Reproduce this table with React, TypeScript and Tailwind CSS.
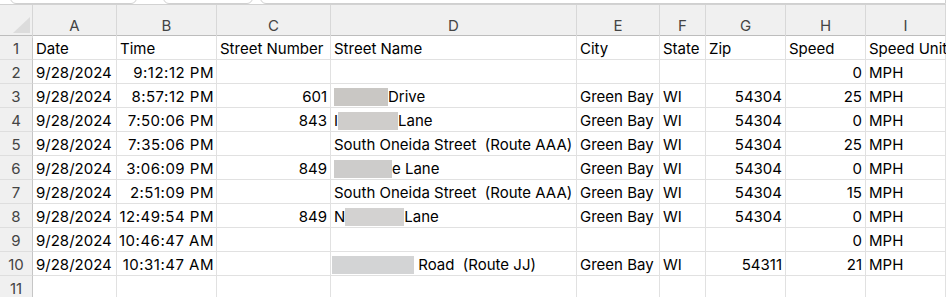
import React from 'react'

const COLS = ['A', 'B', 'C', 'D', 'E', 'F', 'G', 'H', 'I']
const GRID = 'grid grid-cols-[33px_84px_100px_114px_246px_83px_46px_80px_80px_80px]'

type Cell = string | React.ReactNode
type Row = { cells: Cell[]; right: boolean[] }

// grey redaction block
const Blur = ({ w, tone = 'bg-[#c9c7c4]', className = '' }: { w: number; tone?: string; className?: string }) => (
  <span className={`inline-block h-[18px] ${tone} align-middle ${className}`} style={{ width: w }} />
)

const R = [false, true, true, false, false, false, true, true, false]

const rows: Row[] = [
  { cells: ['Date', 'Time', 'Street Number', 'Street Name', 'City', 'State', 'Zip', 'Speed', 'Speed Unit'], right: [false, false, false, false, false, false, false, false, false] },
  { cells: ['9/28/2024', '9:12:12 PM', '', '', '', '', '', '0', 'MPH'], right: R },
  { cells: ['9/28/2024', '8:57:12 PM', '601', <><Blur w={54} />Drive</>, 'Green Bay', 'WI', '54304', '25', 'MPH'], right: R },
  { cells: ['9/28/2024', '7:50:06 PM', '843', <>I<Blur w={60} tone="bg-[#cfcdcb]" />Lane</>, 'Green Bay', 'WI', '54304', '0', 'MPH'], right: R },
  { cells: ['9/28/2024', '7:35:06 PM', '', 'South Oneida Street  (Route AAA)', 'Green Bay', 'WI', '54304', '25', 'MPH'], right: R },
  { cells: ['9/28/2024', '3:06:09 PM', '849', <><Blur w={58} tone="bg-[#cdcccb]" />e Lane</>, 'Green Bay', 'WI', '54304', '0', 'MPH'], right: R },
  { cells: ['9/28/2024', '2:51:09 PM', '', 'South Oneida Street  (Route AAA)', 'Green Bay', 'WI', '54304', '15', 'MPH'], right: R },
  { cells: ['9/28/2024', '12:49:54 PM', '849', <>N<Blur w={59} tone="bg-[#d3d2d1]" />Lane</>, 'Green Bay', 'WI', '54304', '0', 'MPH'], right: R },
  { cells: ['9/28/2024', '10:46:47 AM', '', '', '', '', '', '0', 'MPH'], right: R },
  { cells: ['9/28/2024', '10:31:47 AM', '', <><Blur w={82} tone="bg-[#d3d4d5]" className="-ml-[2px]" /> Road  (Route JJ)</>, 'Green Bay', 'WI', '54311', '21', 'MPH'], right: R },
  { cells: ['', '', '', '', '', '', '', '', ''], right: R },
]

export default function App() {
  return (
    <div className="w-[946px] h-[297px] overflow-hidden bg-white text-black font-['Inter','Liberation_Sans',sans-serif]">
      {/* ribbon bottom edge */}
      <div className="h-[5px] flex items-end overflow-hidden border-b border-[#d2d2d2] bg-white">
        <div className="ml-[10px] w-[127px] h-[12px] shrink-0 border border-[#d0d0d0] rounded-b-[6px]" />
        <div className="ml-[26px] w-[90px] h-[12px] shrink-0 border border-[#d0d0d0] rounded-b-[6px]" />
        <div className="ml-[7px] flex-1 h-[12px] border border-[#d0d0d0] rounded-bl-[6px]" />
      </div>

      {/* column letters */}
      <div className={`${GRID} h-[31px] bg-[#f0f0f0] border-b border-[#bdbdbd]`}>
        <div className="relative border-r border-[#d6d6d6]">
          <div className="absolute left-[13px] top-[12px] w-0 h-0 border-l-[17px] border-l-transparent border-b-[16px] border-b-[#dcdcdc]" />
        </div>
        {COLS.map(c => (
          <div key={c} className="flex items-center justify-center pt-[10px] text-[15px] text-[#444] border-r border-[#d8d8d8]">
            {c}
          </div>
        ))}
      </div>

      {rows.map((row, i) => (
        <div key={i} className={GRID}>
          <div className="h-[24px] flex items-center justify-center pt-[3px] bg-[#f0f0f0] border-r border-b border-[#c6c6c6] border-b-[#dedede] text-[15px] text-[#444]">
            {i + 1}
          </div>
          {row.cells.map((c, j) => (
            <div
              key={j}
              className={`h-[24px] flex items-center px-[3px] pt-[3px] whitespace-pre text-[15px] border-r border-b border-[#e1e1e1] ${row.right[j] ? 'justify-end' : 'justify-start'}`}
            >
              {j === 1 && i > 0 ? <span className="tracking-[0.5px] mr-[-1px]">{c}</span> : c}
            </div>
          ))}
        </div>
      ))}
    </div>
  )
}
